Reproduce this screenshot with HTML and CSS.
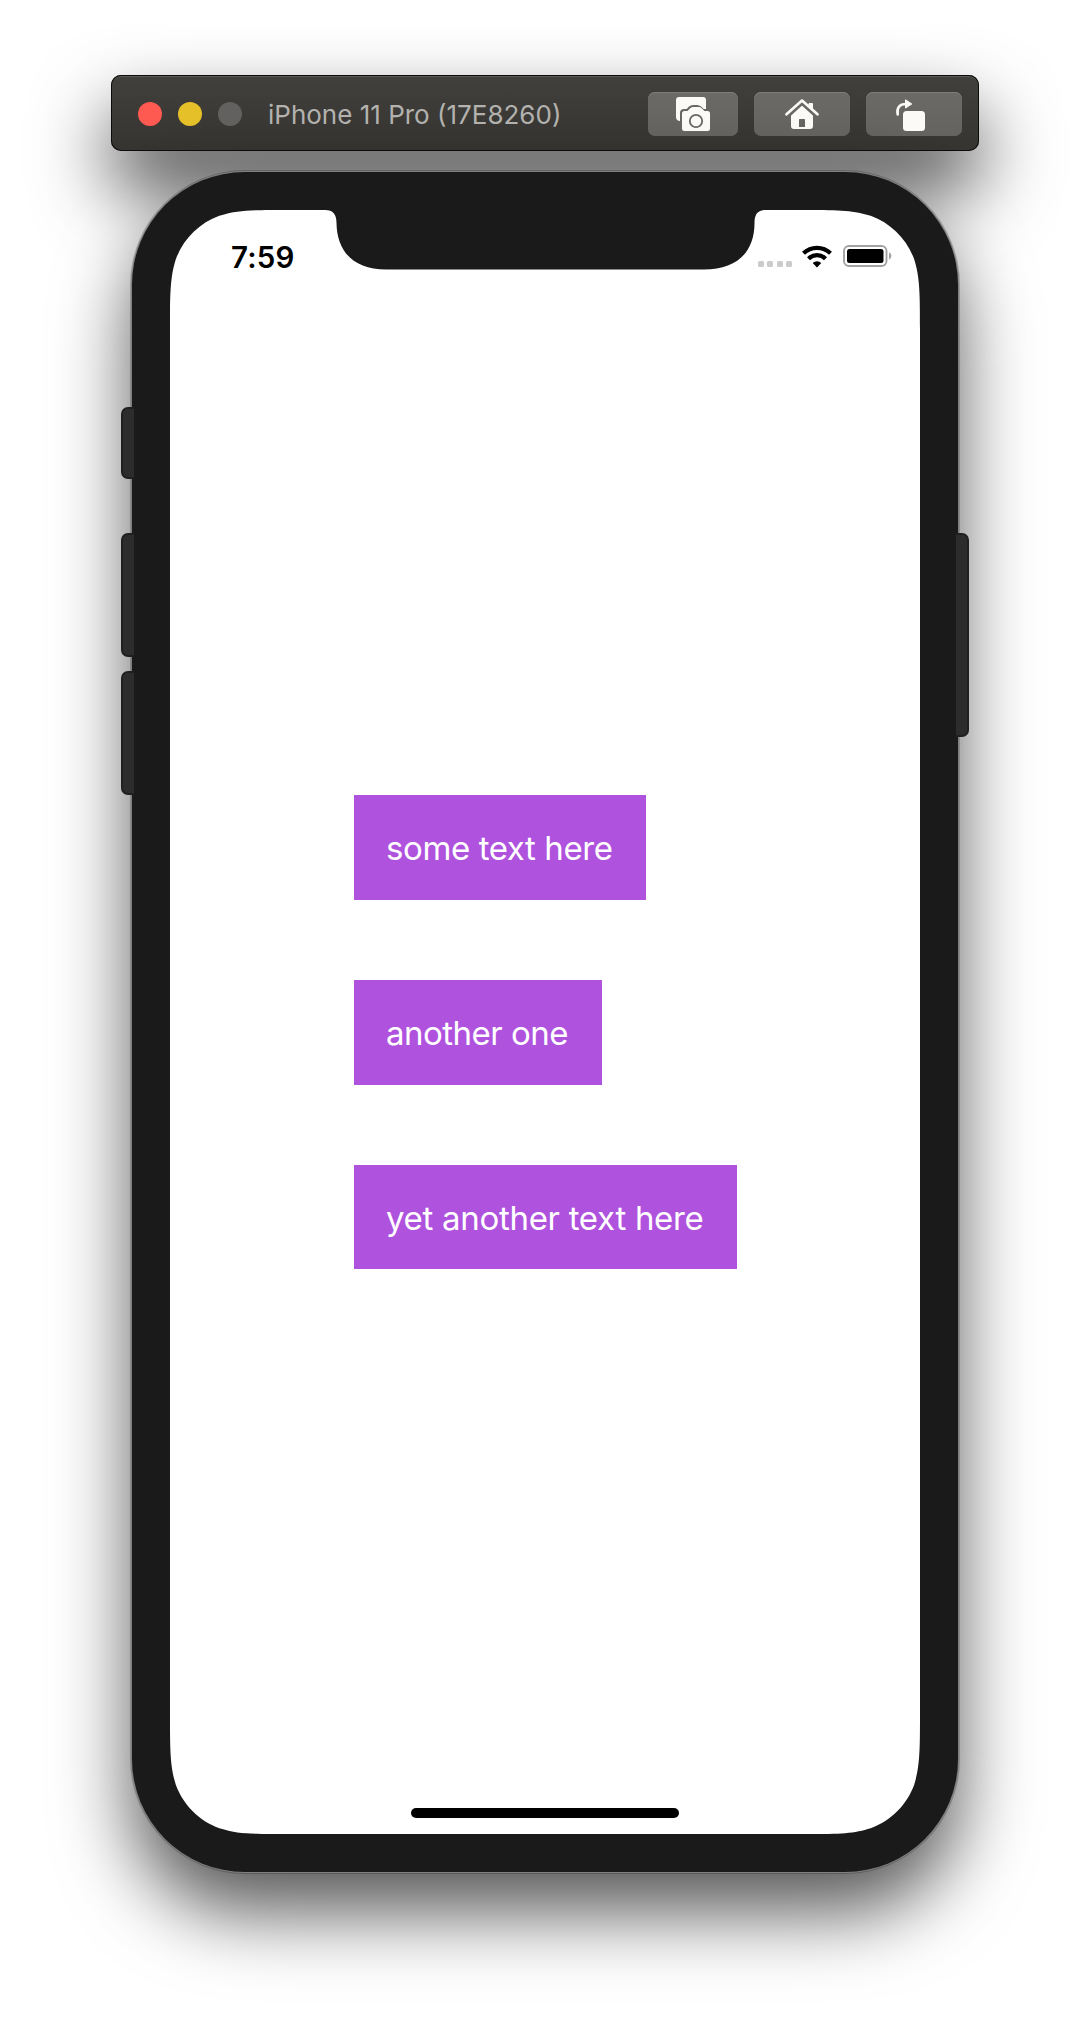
FILE: index.html
```html
<!DOCTYPE html>
<html lang="en">
<head>
<meta charset="utf-8">
<title>iPhone 11 Pro (17E8260)</title>
<link rel="stylesheet" href="styles.css">
</head>
<body>
<header class="toolbar">
  <div class="lights">
    <span class="light light-close"></span>
    <span class="light light-minimize"></span>
    <span class="light light-zoom"></span>
  </div>
  <h1 class="title">iPhone 11 Pro (17E8260)</h1>
  <div class="actions">
    <button class="action action-shot" aria-label="Screenshot">
      <svg width="90" height="44" viewBox="0 0 90 44">
        <path fill="#fbfaf6" d="M31 5h24q3 0 3 3v9h-2.600l-2.400-2.400q-1.600-1.600-4-1.600h-4q-2.400 0-4 1.600L38.600 17H36q-4 0-4 4v8q-4-.3-4-4V8q0-3 3-3z"/>
        <path fill="#fbfaf6" stroke="#696864" stroke-width="1.600" paint-order="stroke" d="M36.500 19h3l3.300-3.200q1-.8 2.200-.8h6q1.200 0 2.200.8l3.300 3.200h3q2.500 0 2.500 2.500v15q0 2.500-2.500 2.500h-23q-2.500 0-2.500-2.500v-15q0-2.500 2.500-2.500z"/>
        <circle cx="48" cy="29" r="6.200" fill="none" stroke="#696864" stroke-width="1.800"/>
      </svg>
    </button>
    <button class="action" aria-label="Home">
      <svg width="96" height="44" viewBox="0 0 96 44">
        <path fill="#fbfaf6" d="M54.500 15V12q0-1 1-1H58q1 0 1 1v7z"/>
        <path fill="#fbfaf6" fill-rule="evenodd" d="M37 22.600L48 12.600l11 10V34q0 3-3 3H40q-3 0-3-3zM45.800 27q-.8 0-.8.8V35h6v-7.200q0-.8-.8-.8z"/>
        <path d="M34.500 24.500L48 12.200l13.500 12.300" fill="none" stroke="#696864" stroke-width="2"/>
        <path d="M32.500 22.300L48 8.600l15.500 13.700" fill="none" stroke="#fbfaf6" stroke-width="2.700" stroke-linecap="round" stroke-linejoin="round"/>
      </svg>
    </button>
    <button class="action" aria-label="Rotate">
      <svg width="96" height="44" viewBox="0 0 96 44">
        <rect x="37" y="19" width="22" height="20" rx="3.500" fill="#fbfaf6"/>
        <path d="M31.700 22.500C30.500 16 33.500 12 40 12" fill="none" stroke="#fbfaf6" stroke-width="2.600" stroke-linecap="round"/>
        <path d="M39.500 7.800L45.800 12l-6.300 4z" fill="#fbfaf6" stroke="#fbfaf6" stroke-width="1" stroke-linejoin="round"/>
      </svg>
    </button>
  </div>
</header>

<main class="phone">
  <span class="key key-mute"></span>
  <span class="key key-up"></span>
  <span class="key key-down"></span>
  <span class="key key-side"></span>
  <div class="screen">
    <div class="status">
      <time class="clock">7:59</time>
      <div class="signals">
        <div class="cellular"><i></i><i></i><i></i><i></i></div>
        <svg class="wifi" width="30" height="23" viewBox="0 0 30 23">
          <g fill="none" stroke="#000" stroke-width="4.200">
            <path d="M1.500 8.300a19.300 19.300 0 0 1 27 0"/>
            <path d="M6.500 13.700a12 12 0 0 1 17 0"/>
          </g>
          <path d="M15 22.400l-4.300-4.300a6.200 6.200 0 0 1 8.600 0z"/>
        </svg>
        <svg class="battery" width="49" height="22" viewBox="0 0 49 22">
          <rect x="1" y="1" width="42.500" height="20" rx="5" fill="none" stroke="#a2a2a2" stroke-width="1.900"/>
          <rect x="4" y="4" width="36.500" height="14" rx="2.500"/>
          <path d="M46 7.300q2.400 1 2.400 3.700t-2.400 3.700z" fill="#a2a2a2"/>
        </svg>
      </div>
    </div>
    <div class="content">
      <p class="label label-first">some text here</p>
      <p class="label label-second">another one</p>
      <p class="label label-third">yet another text here</p>
    </div>
    <div class="home-bar"></div>
  </div>
</main>
</body>
</html>
```

FILE: styles.css
```css
* { box-sizing: border-box; }

body {
  margin: 0;
  height: 2022px;
  padding-top: 75px;
  display: flex;
  flex-direction: column;
  align-items: center;
  gap: 21px;
  overflow: hidden;
  background: #fff;
  font-family: Inter, "Liberation Sans", sans-serif;
}

.toolbar {
  flex: none;
  width: 868px;
  height: 76px;
  display: flex;
  align-items: center;
  padding: 1px 17px 0 27px;
  border-radius: 10px;
  background: linear-gradient(#41403c, #353430);
  box-shadow:
    inset 0 0 0 1px #0b0b0a,
    inset 0 2px 0 #5b5a56,
    0 38px 76px rgba(0, 0, 0, .72);
}

.lights { display: flex; gap: 16px; }
.light { width: 24px; height: 24px; border-radius: 50%; }
.light-close { background: #ff5a52; }
.light-minimize { background: #e6c029; }
.light-zoom { background: #62615f; }

.title {
  margin: 2px 0 0 26px;
  font-size: 26px;
  line-height: 32px;
  font-weight: 400;
  color: #b3b2ae;
  white-space: nowrap;
}

.actions { display: flex; gap: 16px; margin-left: auto; }
.action {
  width: 96px;
  height: 44px;
  padding: 0;
  border: 0;
  border-radius: 7px;
  background: linear-gradient(#6b6a66, #646360);
  box-shadow: inset 0 1px 0 #7e7d7a;
}
.action-shot { width: 90px; }
.action svg { display: block; }

.phone {
  position: relative;
  flex: none;
  width: 826px;
  height: 1700px;
  padding: 38px;
  border-radius: 113px;
  background: #1a1a1a;
  box-shadow:
    0 0 0 1px #808080,
    0 0 0 2px rgba(0, 0, 0, .2),
    0 40px 76px rgba(0, 0, 0, .66);
}

/* hardware keys overlap the edge of the body */
.key {
  position: absolute;
  left: -11px;
  width: 13px;
  border: 2px solid #202020;
  border-right: 0;
  border-radius: 7px 0 0 7px;
  background: #2c2c2c;
}
.key-mute { top: 235px; height: 72px; }
.key-up { top: 361px; height: 124px; }
.key-down { top: 499px; height: 124px; }
.key-side {
  top: 361px;
  left: auto;
  right: -11px;
  height: 204px;
  border-right: 2px solid #202020;
  border-left: 0;
  border-radius: 0 7px 7px 0;
}

/* continuous corners and the sensor notch */
.screen {
  width: 750px;
  height: 1624px;
  display: flex;
  flex-direction: column;
  background: #fff;
  clip-path: path("M119.200 0H155C163 0 166.500 4 166.500 13C167 43 185 59.500 216 59.500H534C566 59.500 584.500 43 584.500 13C584.500 4 588 0 596 0H630.800C665.100 0 682.300 0 697.700 5.100L700.700 5.800C720.900 13.200 736.800 29.100 744.200 49.300C750 67.700 750 84.900 750 119.200V1504.800C750 1539.100 750 1556.300 744.200 1574.700C736.800 1594.900 720.900 1610.800 700.700 1618.200L697.700 1618.900C682.300 1624 665.100 1624 630.800 1624H119.200C84.900 1624 67.700 1624 52.300 1618.900L49.300 1618.200C29.100 1610.800 13.200 1594.900 5.800 1574.700C0 1556.300 0 1539.100 0 1504.800V119.200C0 84.900 0 67.700 5.800 49.300C13.200 29.100 29.100 13.200 49.300 5.800L52.300 5.100C67.700 0 84.900 0 119.200 0Z");
}

.status {
  height: 88px;
  display: flex;
  justify-content: space-between;
  padding: 29px 28px 0 61px;
}
.clock {
  font-size: 29.500px;
  line-height: 36px;
  font-weight: 600;
  letter-spacing: .2px;
}
.signals { display: flex; align-items: flex-start; padding-top: 6px; }
.cellular { display: flex; gap: 3.400px; padding-top: 16px; margin-right: 10px; }
.cellular i { width: 6px; height: 6px; border-radius: 1.500px; background: #cbcbcb; }
.wifi { margin-right: 11px; }

.content {
  flex: 1;
  display: flex;
  flex-direction: column;
  align-items: flex-start;
  gap: 80px;
  padding: 497.300px 0 0 184px;
}
.label {
  margin: 0;
  height: 104.670px;
  padding: 32px;
  background: #af52de;
  color: #fff;
  font-size: 33px;
  line-height: 42px;
  letter-spacing: -.4px;
  white-space: nowrap;
}
.label-first { width: 292px; }
.label-second { width: 248px; letter-spacing: -.5px; }
.label-third { width: 383px; letter-spacing: -.3px; }

.home-bar {
  align-self: center;
  width: 268px;
  height: 10px;
  margin-bottom: 16px;
  border-radius: 5px;
  background: #000;
}
```
